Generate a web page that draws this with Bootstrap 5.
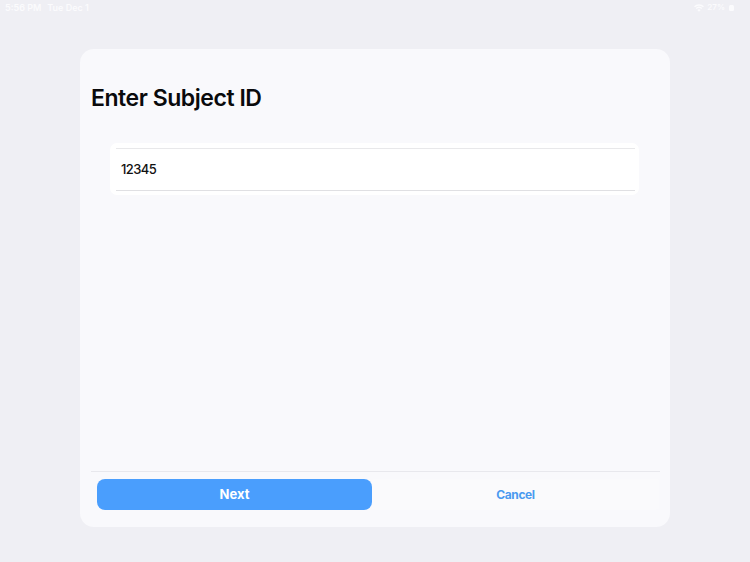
<!DOCTYPE html>
<html lang="en">
<head>
<meta charset="utf-8">
<title>Enter Subject ID</title>
<link rel="stylesheet" href="https://cdn.jsdelivr.net/npm/bootstrap@5.3.0/dist/css/bootstrap.min.css">
<style>
html, body { height: 100%; }
body { background: #efeff4; font-family: Inter, "Liberation Sans", sans-serif; overflow: hidden; }
.screen { height: 562px; display: flex; flex-direction: column; }
.status-row { height: 14px; padding: 1px 15px 0 5px; color: #fbfbfd; font-size: 9px; line-height: 13px; font-weight: 600; }
.status-left { gap: 6px; }
.status-right { gap: 3px; }
.status-pct { font-size: 8px; margin-right: 1px; }
.sheet-wrap { padding: 35px 80px 35px; flex: 1; display: flex; min-height: 0; }
.sheet { flex: 1; background: #f9f9fc; border-radius: 14px; display: flex; flex-direction: column; }
.sheet-title { font-size: 23px; font-weight: 600; letter-spacing: -.45px; color: #0a0a0c; line-height: 30px; margin: 34px 0 30px 11px; }
.field-box { margin: 0 31px 0 30px; height: 52px; background: #fff; border-radius: 7px; padding: 5px 4px 4px 6px; }
.field-inner { height: 43px; border-top: 1px solid #e8e8ea; border-bottom: 1px solid #e0e0e3; padding-left: 5px; font-size: 13px; font-weight: 500; letter-spacing: -.6px; color: #111; display: flex; align-items: center; }
.foot { margin-top: auto; margin-left: 11px; margin-right: 10px; border-top: 1px solid #e8e8ed; height: 56px; padding-top: 7px; padding-left: 6px; display: flex; }
.next-btn { width: 275px; height: 31px; background: #4a9efd; color: #fff; font-size: 13px; font-weight: 700; border: 0; border-radius: 8px; padding: 0; }
.cancel-btn { width: 287px; height: 31px; background: #fafafc; color: #4a9af0; font-size: 12px; font-weight: 700; letter-spacing: -.4px; border: 0; border-radius: 4px; padding: 0; }
.cancel-btn:hover, .next-btn:hover { background: inherit; }
</style>
</head>
<body>
<div class="screen">
  <div class="status-row d-flex justify-content-between align-items-center">
    <div class="d-flex status-left"><span>5:56 PM</span><span>Tue Dec 1</span></div>
    <div class="d-flex align-items-center status-right">
      <svg width="10" height="8" viewBox="0 0 20 15" fill="#fbfbfd" aria-hidden="true"><path d="M10 15l-3.200-3.600a4.600 4.600 0 0 1 6.400 0zM5.300 9.700L3.400 7.600a9.600 9.600 0 0 1 13.200 0l-1.900 2.100a7 7 0 0 0-9.400 0zM1.900 6L0 3.900a14.600 14.600 0 0 1 20 0L18.100 6a12 12 0 0 0-16.200 0z"/></svg>
      <span class="status-pct">27%</span>
      <svg width="6" height="8" viewBox="0 0 6 8" aria-hidden="true"><rect x="0" y="1" width="5" height="6" rx="1.500" fill="#fbfbfd"/></svg>
    </div>
  </div>
  <div class="sheet-wrap">
    <div class="sheet">
      <h1 class="sheet-title">Enter Subject ID</h1>
      <div class="field-box"><div class="field-inner">12345</div></div>
      <div class="foot">
        <button type="button" class="btn next-btn">Next</button>
        <button type="button" class="btn cancel-btn">Cancel</button>
      </div>
    </div>
  </div>
</div>
<script src="https://cdn.jsdelivr.net/npm/bootstrap@5.3.0/dist/js/bootstrap.bundle.min.js"></script>
</body>
</html>
